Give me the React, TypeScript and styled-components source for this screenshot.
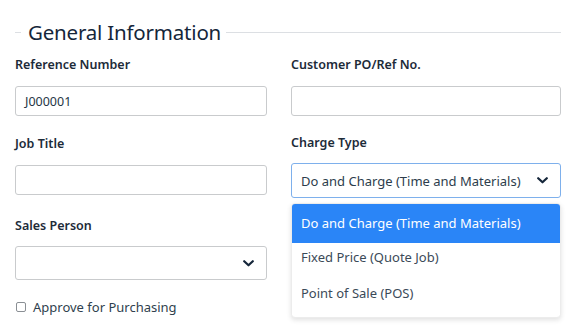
import React from "react";
import styled, { createGlobalStyle } from "styled-components";

const Global = createGlobalStyle`
  html, body { margin: 0; padding: 0; background: #fff; }
  body { font-family: "Noto Sans", "Open Sans", sans-serif; color: #1d2b39; }
  * { box-sizing: border-box; }
`;

const Page = styled.div`
  width: 570px;
  height: 330px;
  padding: 0 9px 0 15px;
  overflow: hidden;
`;

const Fieldset = styled.fieldset`
  margin: 19px 0 0;
  padding: 0;
  border: none;
  border-top: 1px solid #dcdfe3;
  min-width: 0;
`;

const Legend = styled.legend`
  font-size: 20.5px;
  font-weight: 400;
  color: #15263a;
  padding: 0 5px 0 7px;
  margin-left: 6px;
  line-height: 26px;
  letter-spacing: -0.2px;
`;

const Grid = styled.div`
  display: grid;
  grid-template-columns: 252px 270px;
  column-gap: 24px;
  margin-top: 12px;
`;

const Column = styled.div`
  display: flex;
  flex-direction: column;
  position: relative;
`;

const Label = styled.label<{ $gap?: number }>`
  font-size: 12.5px;
  font-weight: 600;
  color: #1d2b39;
  line-height: 16px;
  margin-bottom: ${p => p.$gap ?? 13}px;
  display: block;
`;

const Field = styled.div<{ $mb?: number }>`
  margin-bottom: ${p => p.$mb ?? 0}px;
  display: flex;
  flex-direction: column;
`;

const Input = styled.div<{ $h?: number; $focus?: boolean }>`
  height: ${p => p.$h ?? 30}px;
  border: 1px solid ${p => (p.$focus ? "#7eb0ec" : "#c9cbcd")};
  border-radius: 3px;
  display: flex;
  align-items: center;
  justify-content: space-between;
  padding: 0 12px 0 9px;
  font-size: 12.5px;
  color: #263645;
  background: #fff;
`;

const SelectText = styled.span`
  font-size: 13px;
  color: #2d3d4c;
`;

const Chevron = () => (
  <svg width="11" height="7" viewBox="0 0 11 7">
    <path d="M1.2 1.2 L5.5 5.3 L9.8 1.2" fill="none" stroke="#15263a" strokeWidth="2.2" strokeLinecap="round" strokeLinejoin="round" />
  </svg>
);

const Menu = styled.ul`
  position: absolute;
  left: 0;
  right: 0;
  top: 146px;
  margin: 0;
  padding: 0 0 2px;
  list-style: none;
  background: #fff;
  border: 1px solid #ececec;
  border-radius: 4px;
  box-shadow: 0 2px 5px rgba(0, 0, 0, 0.12);
  overflow: hidden;
`;

const Option = styled.li<{ $active?: boolean }>`
  height: ${p => (p.$active ? 39 : 36)}px;
  line-height: ${p => (p.$active ? 39 : 18)}px;
  padding: ${p => (p.$active ? "0 0 0 9px" : "5px 0 0 9px")};
  font-size: 13px;
  color: ${p => (p.$active ? "#fff" : "#3b4a58")};
  background: ${p => (p.$active ? "#2a85f7" : "#fff")};
`;

const CheckRow = styled.label`
  display: flex;
  align-items: center;
  gap: 7px;
  font-size: 13px;
  color: #2f3f4e;
  margin-top: 18px;
  padding-left: 1px;
`;

const Box = styled.span`
  width: 10px;
  height: 10px;
  border: 1px solid #8a8f94;
  border-radius: 2px;
  display: inline-block;
`;

export default function App() {
  return (
    <Page>
      <Global />
      <Fieldset>
        <Legend>General Information</Legend>
        <Grid>
          <Column>
            <Field $mb={20}>
              <Label>Reference Number</Label>
              <Input>J000001</Input>
            </Field>
            <Field $mb={23}>
              <Label>Job Title</Label>
              <Input />
            </Field>
            <Field>
              <Label $gap={12}>Sales Person</Label>
              <Input $h={34}>
                <span />
                <Chevron />
              </Input>
            </Field>
            <CheckRow>
              <Box />
              Approve for Purchasing
            </CheckRow>
          </Column>
          <Column>
            <Field $mb={19}>
              <Label>Customer PO/Ref No.</Label>
              <Input />
            </Field>
            <Field>
              <Label $gap={12}>Charge Type</Label>
              <Input $h={35} $focus>
                <SelectText>Do and Charge (Time and Materials)</SelectText>
                <Chevron />
              </Input>
            </Field>
            <Menu>
              <Option $active>Do and Charge (Time and Materials)</Option>
              <Option>Fixed Price (Quote Job)</Option>
              <Option>Point of Sale (POS)</Option>
            </Menu>
          </Column>
        </Grid>
      </Fieldset>
    </Page>
  );
}
